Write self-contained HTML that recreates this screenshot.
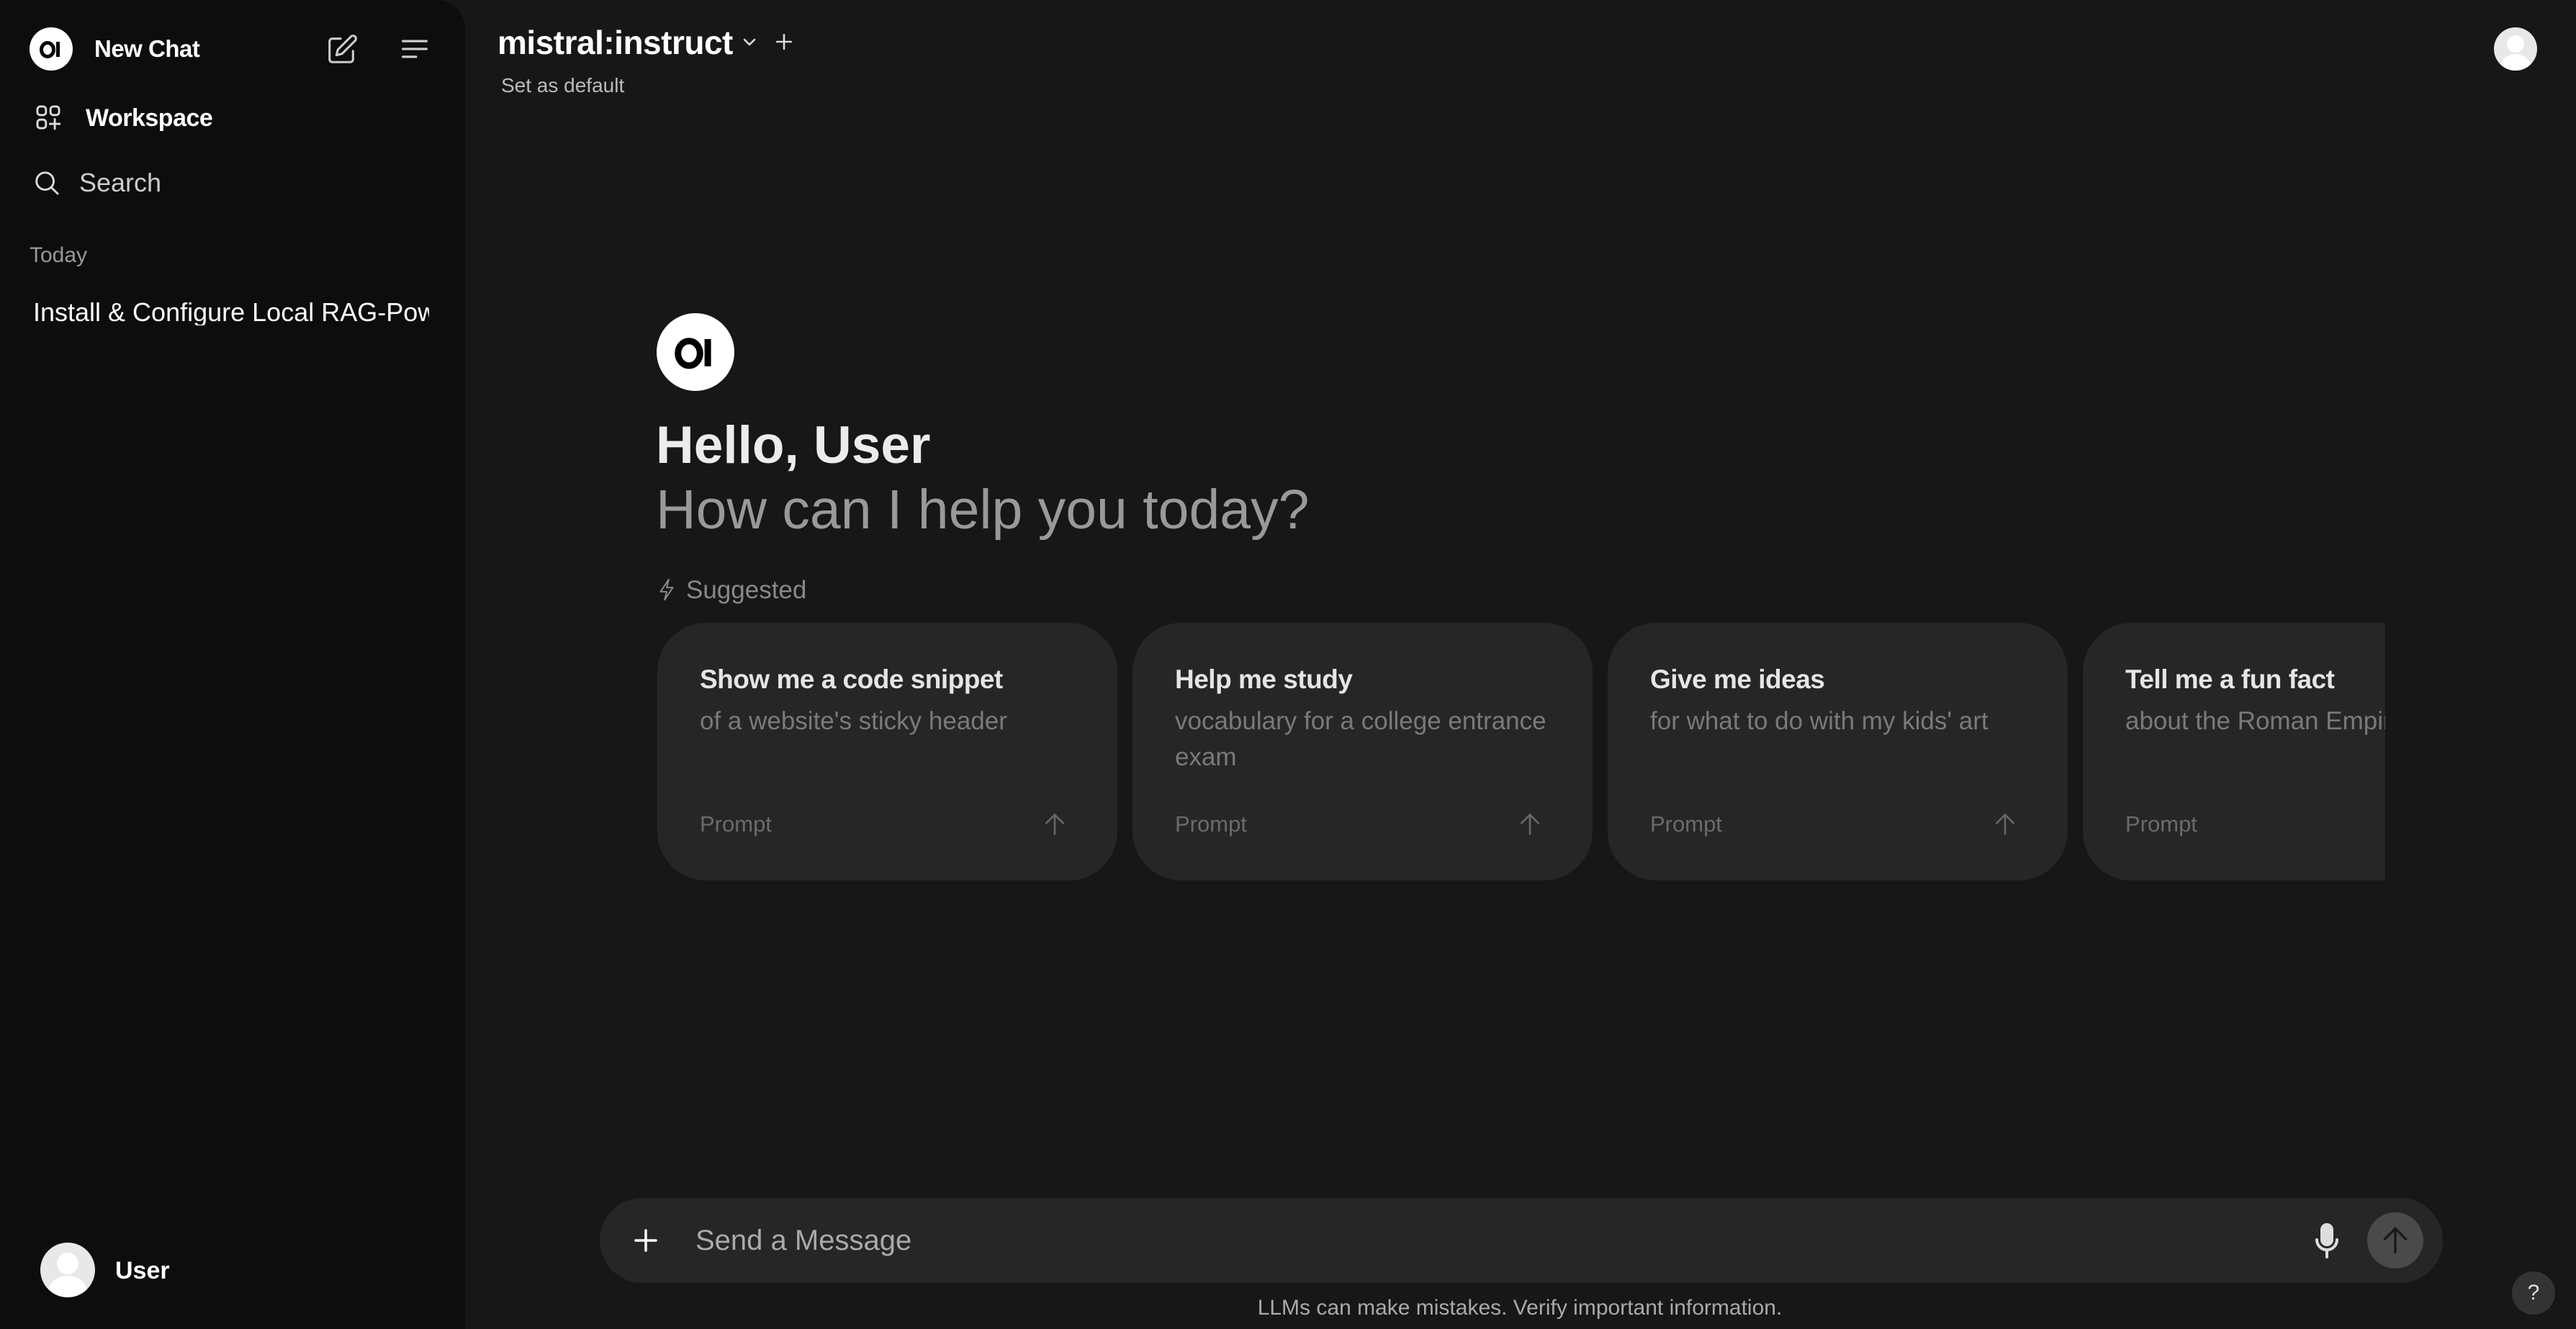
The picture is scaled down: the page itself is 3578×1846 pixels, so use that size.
<!DOCTYPE html>
<html><head><meta charset="utf-8"><style>
*{margin:0;padding:0;box-sizing:border-box}
body{width:3578px;height:1846px;background:#171717;font-family:"Liberation Sans",sans-serif;position:relative;overflow:hidden;color:#fff}
.a{position:absolute}
.side{left:0;top:0;width:646px;height:1846px;background:#0d0d0d;border-top-right-radius:40px}
.logo{background:#fff;border-radius:50%}
.t{white-space:nowrap;line-height:1}
.card{position:absolute;top:865px;height:358px;width:639px;background:#262626;border-radius:68px;overflow:hidden}
.card .h{position:absolute;left:59px;top:58px;font-size:37px;font-weight:700;color:#e5e5e5;white-space:nowrap;letter-spacing:-0.5px}
.card .s{position:absolute;left:59px;top:112px;width:540px;font-size:35px;color:#7a7a7a;line-height:50px}
.card .p{position:absolute;left:59px;top:262px;font-size:31px;color:#6b6b6b}
.card svg{position:absolute;left:532px;top:260px}
</style></head><body>
<div class="a side"></div>
<div class="a logo" style="left:41px;top:38px;width:60px;height:60px"></div>
<svg class="a" style="left:41px;top:38px" width="60" height="60" viewBox="0 0 60 60"><ellipse cx="25" cy="31" rx="8.5" ry="9.5" fill="none" stroke="#000" stroke-width="5"/><rect x="37" y="20" width="5" height="21" fill="#000"/></svg>
<div class="a t" style="left:131px;top:51px;font-size:33px;font-weight:700;letter-spacing:-0.5px">New Chat</div>
<svg class="a" style="left:452px;top:46px" width="46" height="46" viewBox="0 0 24 24" fill="none" stroke="#ccc" stroke-width="1.6" stroke-linecap="round" stroke-linejoin="round"><path d="M11 4H5a2 2 0 0 0-2 2v13a2 2 0 0 0 2 2h13a2 2 0 0 0 2-2v-6"/><path d="M18.5 2.5a2.1 2.1 0 0 1 3 3L12 15l-4 1 1-4z"/></svg>
<svg class="a" style="left:554px;top:48px" width="44" height="40" viewBox="0 0 24 22" stroke="#ccc" stroke-width="1.8" stroke-linecap="round"><path d="M3 5h18M3 11h18M3 17h10"/></svg>
<svg class="a" style="left:48px;top:144px" width="38" height="38" viewBox="0 0 24 24" fill="none" stroke="#ddd" stroke-width="1.8" stroke-linecap="round"><rect x="2.5" y="2.5" width="7.5" height="7.5" rx="2.5"/><rect x="14" y="2.5" width="7.5" height="7.5" rx="2.5"/><rect x="2.5" y="14" width="7.5" height="7.5" rx="2.5"/><path d="M17.75 13.5v8.5M13.5 17.75h8.5"/></svg>
<div class="a t" style="left:119px;top:147px;font-size:34px;font-weight:700;letter-spacing:-0.5px">Workspace</div>
<svg class="a" style="left:46px;top:235px" width="38" height="38" viewBox="0 0 24 24" fill="none" stroke="#ddd" stroke-width="1.8" stroke-linecap="round"><circle cx="10.5" cy="10.5" r="7.5"/><path d="M16 16l5.5 5.5"/></svg>
<div class="a t" style="left:110px;top:236px;font-size:36px;color:#ccc">Search</div>
<div class="a t" style="left:41px;top:340px;font-size:30px;color:#999">Today</div>
<div class="a t" style="left:46px;top:416px;font-size:36px;width:550px;overflow:hidden">Install &amp; Configure Local RAG-Powered</div>
<div class="a" style="left:56px;top:1726px;width:76px;height:76px;border-radius:50%;background:#e8e8e8;overflow:hidden"><div class="a" style="left:23px;top:14px;width:30px;height:30px;border-radius:50%;background:#fff"></div><div class="a" style="left:10px;top:46px;width:56px;height:50px;border-radius:50%;background:#fff"></div></div>
<div class="a t" style="left:160px;top:1748px;font-size:34px;font-weight:700">User</div>
<div class="a t" style="left:691px;top:36px;font-size:46px;font-weight:700;letter-spacing:-0.5px">mistral:instruct</div>
<svg class="a" style="left:1028px;top:47px" width="26" height="24" viewBox="0 0 24 24" fill="none" stroke="#ddd" stroke-width="2.6" stroke-linecap="round" stroke-linejoin="round"><path d="M5 8l7 7 7-7"/></svg>
<svg class="a" style="left:1076px;top:45px" width="26" height="26" viewBox="0 0 24 24" stroke="#ddd" stroke-width="2.4" stroke-linecap="round"><path d="M12 3v18M3 12h18"/></svg>
<div class="a t" style="left:696px;top:105px;font-size:28px;color:#bbb">Set as default</div>
<div class="a" style="left:3464px;top:38px;width:60px;height:60px;border-radius:50%;background:#e8e8e8;overflow:hidden"><div class="a" style="left:18px;top:11px;width:24px;height:24px;border-radius:50%;background:#fff"></div><div class="a" style="left:8px;top:37px;width:44px;height:40px;border-radius:50%;background:#fff"></div></div>
<div class="a logo" style="left:912px;top:435px;width:108px;height:108px"></div>
<svg class="a" style="left:912px;top:435px" width="108" height="108" viewBox="0 0 60 60"><ellipse cx="25" cy="31" rx="8.5" ry="9.5" fill="none" stroke="#000" stroke-width="5"/><rect x="37" y="20" width="5" height="21" fill="#000"/></svg>
<div class="a t" style="left:911px;top:582px;font-size:73px;font-weight:700;color:#ececec">Hello, User</div>
<div class="a t" style="left:911px;top:670px;font-size:77px;color:#999">How can I help you today?</div>
<svg class="a" style="left:913px;top:802px" width="26" height="34" viewBox="0 0 16 24" fill="none" stroke="#888" stroke-width="1.4" stroke-linejoin="round"><path d="M10 2L2 14h6l-2 8 8-12H8z"/></svg>
<div class="a t" style="left:953px;top:802px;font-size:35px;color:#888">Suggested</div>
<div style="position:absolute;left:0;top:0;width:3313px;height:1846px;overflow:hidden">
<div class="card" style="left:913px"><div class="h">Show me a code snippet</div><div class="s">of a website's sticky header</div><div class="p">Prompt</div><svg width="40" height="40" viewBox="0 0 24 24" fill="none" stroke="#666" stroke-width="1.6" stroke-linecap="round"><path d="M12 20V4M5 11l7-7 7 7"/></svg></div>
<div class="card" style="left:1573px"><div class="h">Help me study</div><div class="s">vocabulary for a college entrance exam</div><div class="p">Prompt</div><svg width="40" height="40" viewBox="0 0 24 24" fill="none" stroke="#666" stroke-width="1.6" stroke-linecap="round"><path d="M12 20V4M5 11l7-7 7 7"/></svg></div>
<div class="card" style="left:2233px"><div class="h">Give me ideas</div><div class="s">for what to do with my kids' art</div><div class="p">Prompt</div><svg width="40" height="40" viewBox="0 0 24 24" fill="none" stroke="#666" stroke-width="1.6" stroke-linecap="round"><path d="M12 20V4M5 11l7-7 7 7"/></svg></div>
<div class="card" style="left:2893px"><div class="h">Tell me a fun fact</div><div class="s" style="width:800px">about the Roman Empire</div><div class="p">Prompt</div></div>
</div>
<div class="a" style="left:833px;top:1664px;width:2560px;height:118px;border-radius:59px;background:#262626"></div>
<svg class="a" style="left:876px;top:1702px" width="42" height="42" viewBox="0 0 24 24" stroke="#fff" stroke-width="2" stroke-linecap="round"><path d="M12 4v16M4 12h16"/></svg>
<div class="a t" style="left:966px;top:1703px;font-size:40px;color:#aaa">Send a Message</div>
<svg class="a" style="left:3212px;top:1698px" width="40" height="52" viewBox="0 0 20 26" fill="none" stroke="#ddd" stroke-width="2" stroke-linecap="round"><rect x="6.5" y="1.5" width="7" height="14" rx="3.5" fill="#ddd"/><path d="M3 12a7 7 0 0 0 14 0M10 19v5"/></svg>
<div class="a" style="left:3288px;top:1684px;width:78px;height:78px;border-radius:50%;background:#4a4a4a"></div>
<svg class="a" style="left:3305px;top:1701px" width="44" height="44" viewBox="0 0 24 24" fill="none" stroke="#1a1a1a" stroke-width="1.8" stroke-linecap="round"><path d="M12 21V3M4 11l8-8 8 8"/></svg>
<div class="a t" style="left:0;width:4222px;text-align:center;top:1802px;font-size:30px;color:#aaa">LLMs can make mistakes. Verify important information.</div>
<div class="a" style="left:3489px;top:1766px;width:60px;height:60px;border-radius:50%;background:#333;color:#ddd;font-size:30px;text-align:center;line-height:60px">?</div>
</body></html>
